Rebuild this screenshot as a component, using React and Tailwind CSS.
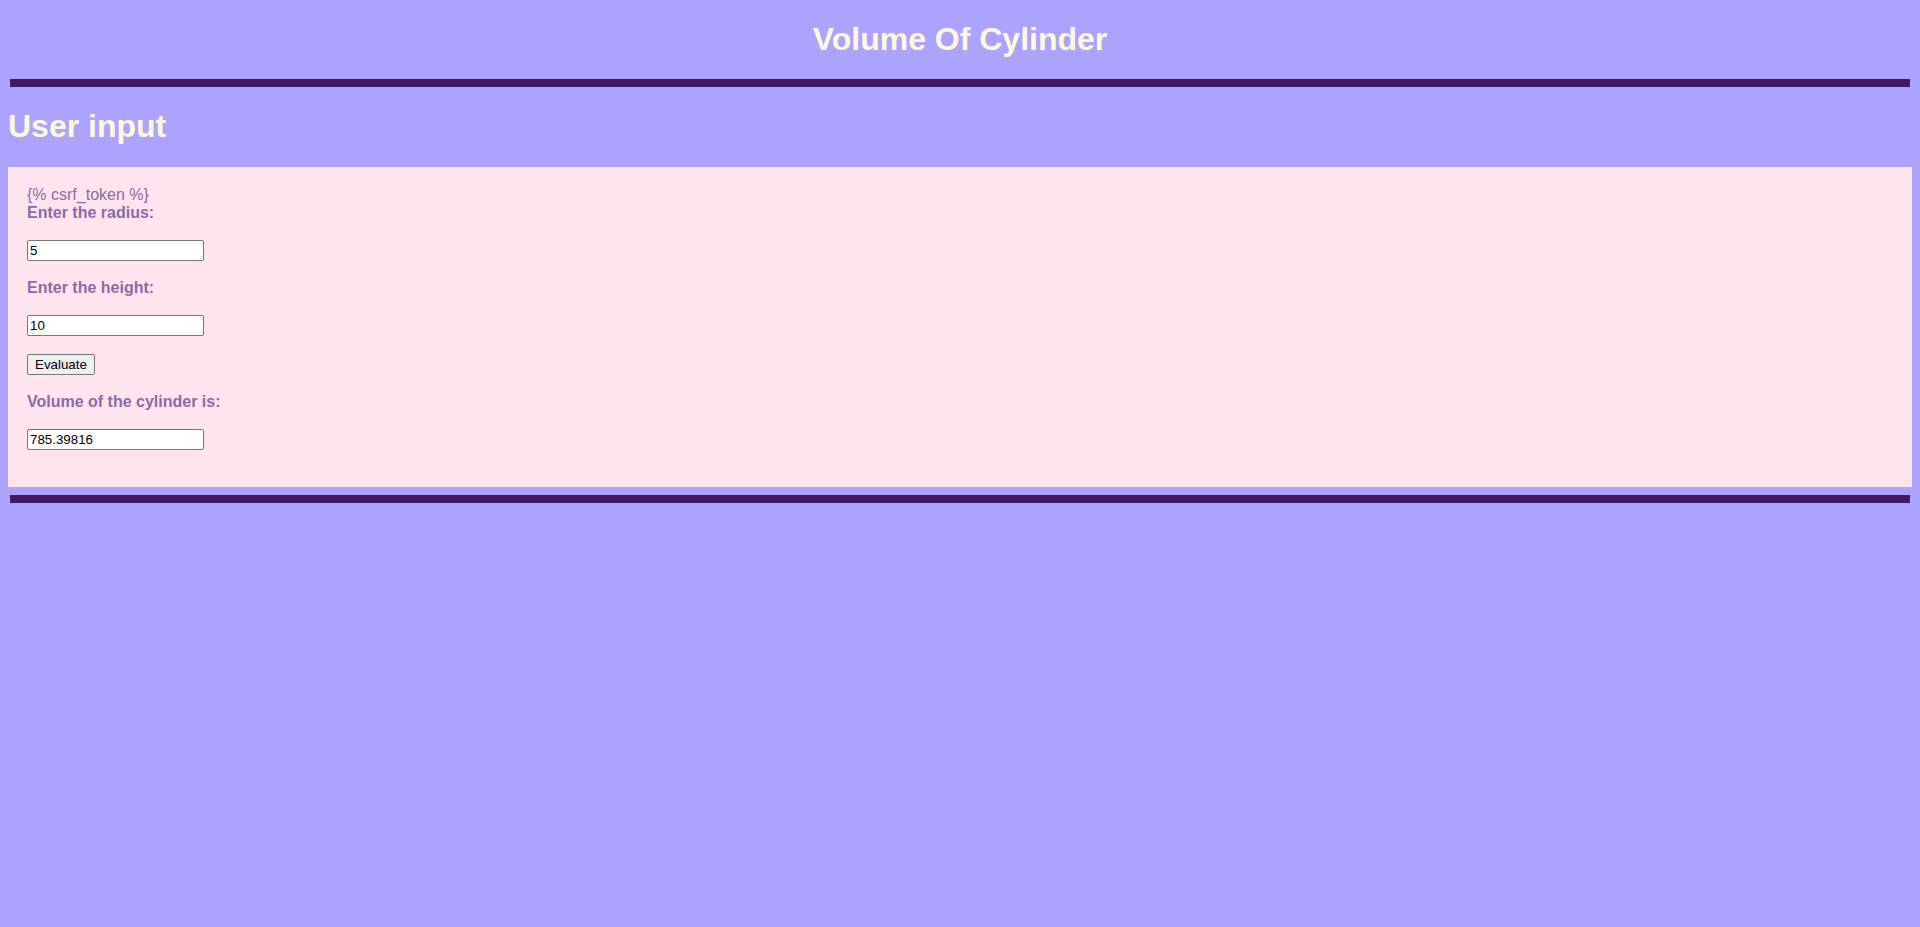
import React, { useState } from "react";

const Field = ({ label, value, onChange, readOnly }) => (
  <div className="flex flex-col">
    <label className="h-[18px] text-[16px] leading-[18px] font-bold text-[#8a6aa6]">{label}</label>
    <div className="h-[18px]" />
    <input
      type="text"
      value={value}
      readOnly={readOnly}
      onChange={(e) => onChange && onChange(e.target.value)}
      className="h-[21px] w-[177px] border border-[#767676] bg-white px-[2px] text-[13.33px] leading-[17px] text-black rounded-[2px] outline-none"
    />
  </div>
);

const App = () => {
  const [radius, setRadius] = useState("5");
  const [height, setHeight] = useState("10");
  const [volume, setVolume] = useState("785.39816");

  const evaluate = () => {
    const r = parseFloat(radius);
    const h = parseFloat(height);
    if (!isNaN(r) && !isNaN(h)) setVolume((Math.PI * r * r * h).toFixed(5));
  };

  return (
    <div className="min-h-[927px] bg-[#aba3ff] px-2 font-['Liberation_Sans',Arial,sans-serif]">
      <div className="flex h-[79px] items-center justify-center pb-[2px]">
        <h1 className="text-[32px] leading-[36px] font-bold text-[#fff8dc]">Volume Of Cylinder</h1>
      </div>
      <div className="mx-[2px] h-2 bg-[#3f1763]" />
      <h2 className="flex h-[80px] items-center pb-[2px] text-[32px] leading-[36px] font-bold text-[#fff8dc]">User input</h2>
      <div className="flex h-[320px] flex-col bg-[#ffe4f0] px-[19px] pt-[19px]">
        <div className="h-[18px] text-[16px] leading-[18px] text-[#8a6aa6]">{"{% csrf_token %}"}</div>
        <Field label="Enter the radius:" value={radius} onChange={setRadius} />
        <div className="h-[18px]" />
        <Field label="Enter the height:" value={height} onChange={setHeight} />
        <div className="h-[18px]" />
        <div className="flex h-[21px]">
          <button
            onClick={evaluate}
            className="h-[21px] rounded-[2px] border border-[#767676] bg-[#efefef] px-[7px] text-[13.33px] leading-[17px] text-black"
          >
            Evaluate
          </button>
        </div>
        <div className="h-[18px]" />
        <Field label="Volume of the cylinder is:" value={volume} readOnly />
      </div>
      <div className="mx-[2px] mt-2 h-2 bg-[#3f1763]" />
    </div>
  );
};

export default App;
